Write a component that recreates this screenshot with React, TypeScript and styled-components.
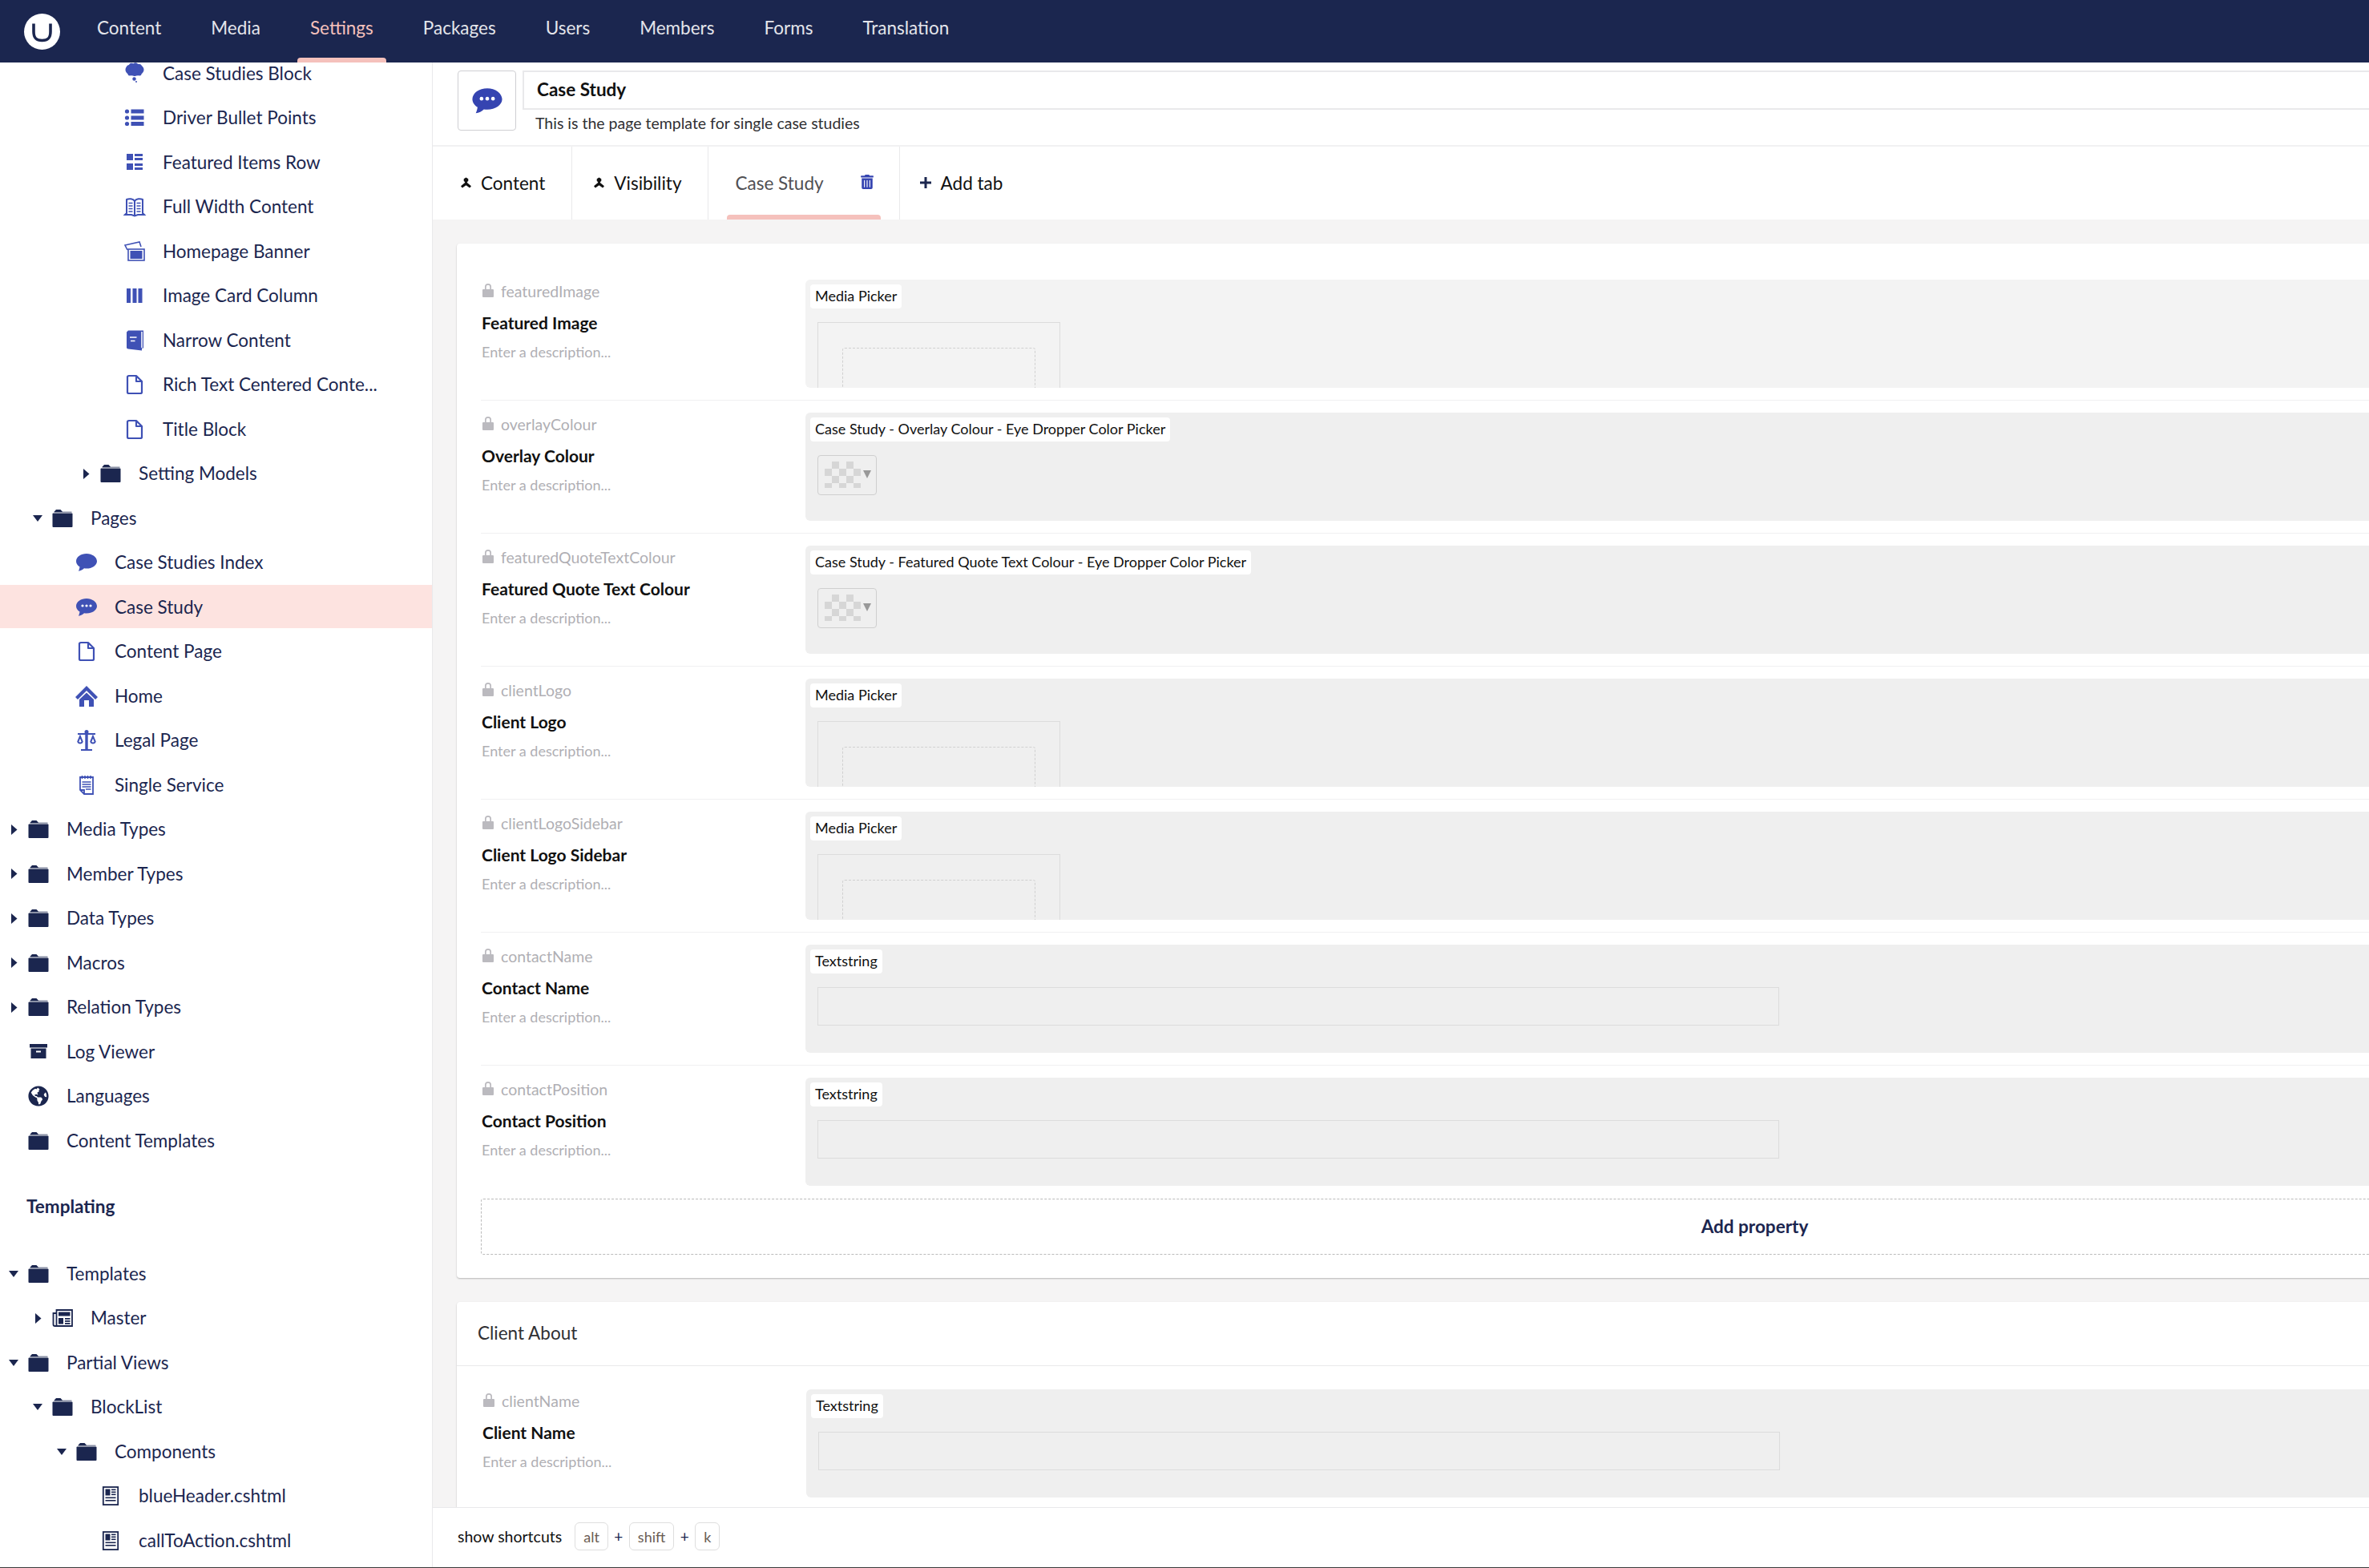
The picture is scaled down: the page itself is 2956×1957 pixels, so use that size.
import * as React from 'react';
import styled, { createGlobalStyle } from 'styled-components';
import { FaGlobeAmericas, FaTrashAlt } from 'react-icons/fa';

const GlobalStyle = createGlobalStyle`
  html, body {
    margin: 0;
    padding: 0;
    background: #fff;
  }
  * {
    box-sizing: border-box;
  }
  body {
    font-family: Lato, "Noto Sans", sans-serif;
    color: #1b264f;
    overflow: hidden;
  }
`;

const Page = styled.div`
  height: 1957px;
  display: flex;
  flex-direction: column;
  overflow: hidden;
  border-bottom: 1px solid #3a3a3a;
`;

const TopBar = styled.header`
  height: 78px;
  flex: none;
  display: flex;
  align-items: center;
  padding-left: 30px;
  background: #1b264f;
`;
const Logo = styled.svg`
  width: 45px;
  height: 45px;
  flex: none;
  margin-right: 15px;
`;
const Nav = styled.nav`
  display: flex;
  height: 100%;
`;
const NavItem = styled.a<{ $active?: boolean }>`
  position: relative;
  display: flex;
  align-items: center;
  height: 100%;
  padding: 0 31px 10px;
  font-size: 22.5px;
  color: ${(p) => (p.$active ? '#f5c1bc' : '#e4e5eb')};
  &::after {
    content: '';
    display: ${(p) => (p.$active ? 'block' : 'none')};
    position: absolute;
    left: 15px;
    right: 15px;
    bottom: 0;
    height: 6px;
    border-radius: 4px 4px 0 0;
    background: #f5c1bc;
  }
`;

const Body = styled.div`
  flex: 1;
  min-height: 0;
  display: flex;
`;

const Sidebar = styled.aside`
  width: 540px;
  flex: none;
  overflow: hidden;
  background: #fff;
  border-right: 1px solid #e9e9eb;
`;
const TreeList = styled.div`
  margin-top: -14px;
`;
const TreeRow = styled.div<{ $level: number; $active?: boolean }>`
  height: ${(p) => (p.$active ? '54px' : '55.5px')};
  margin-bottom: ${(p) => (p.$active ? '1.5px' : '0')};
  display: flex;
  align-items: center;
  padding-top: ${(p) => (p.$active ? '1px' : '0')};
  padding-left: ${(p) => 8 + p.$level * 30}px;
  font-size: 22.5px;
  line-height: 27px;
  color: #1b264f;
  white-space: nowrap;
  background: ${(p) => (p.$active ? '#fde3e0' : 'transparent')};
`;
const RowLabel = styled.span`
  margin-top: -1px;
`;
const CaretSlot = styled.span`
  width: 18px;
  height: 14px;
  flex: none;
  display: flex;
  align-items: center;
  justify-content: center;
  margin-right: 8px;
`;
const IconSlot = styled.span<{ $tone: string }>`
  width: 28px;
  height: 28px;
  flex: none;
  display: flex;
  align-items: center;
  justify-content: center;
  margin-right: 21px;
  color: ${(p) => p.$tone};
  svg {
    display: block;
    overflow: visible;
  }
`;
const SectionTitle = styled.div`
  height: 110.5px;
  display: flex;
  align-items: center;
  padding: 0 0 3px 33px;
  font-size: 22.5px;
  font-weight: 700;
  color: #1b264f;
`;

const Main = styled.main`
  flex: 1;
  min-width: 0;
  display: flex;
  flex-direction: column;
  overflow: hidden;
  background: #fff;
`;
const EditorHead = styled.div`
  height: 105px;
  flex: none;
  display: flex;
  align-items: flex-start;
  padding: 10px 0 0 31px;
  border-bottom: 2px solid #f1f1f2;
`;
const IconBox = styled.div`
  width: 73px;
  height: 75px;
  flex: none;
  display: flex;
  align-items: center;
  justify-content: center;
  margin-right: 8px;
  color: #3544b1;
  border: 1px solid #cfcfd3;
  border-radius: 4px;
`;
const HeadFields = styled.div`
  flex: 1;
  min-width: 0;
`;
const NameField = styled.div`
  height: 49px;
  display: flex;
  align-items: center;
  padding: 0 0 2px 16px;
  font-size: 22.5px;
  font-weight: 700;
  color: #111;
  border-top: 2px solid #e9e9eb;
  border-left: 2px solid #e9e9eb;
  border-bottom: 2px solid #e9e9eb;
`;
const DescField = styled.div`
  padding: 5px 0 0 16px;
  font-size: 19.5px;
  line-height: 24px;
  color: #303033;
`;

const Tabs = styled.div`
  height: 91px;
  flex: none;
  display: flex;
  padding-left: 8px;
`;
const Tab = styled.div<{ $active?: boolean; $last?: boolean }>`
  position: relative;
  display: flex;
  align-items: center;
  padding: ${(p) => (p.$active ? '0 31px 1px 33px' : p.$last ? '0 0 1px 25px' : '0 33px 1px 27px')};
  font-size: 22.5px;
  color: ${(p) => (p.$active ? '#515054' : '#111')};
  border-right: ${(p) => (p.$last ? 'none' : '1px solid #e9e9eb')};
  &::after {
    content: '';
    display: ${(p) => (p.$active ? 'block' : 'none')};
    position: absolute;
    left: 23px;
    right: 23px;
    bottom: 0;
    height: 6px;
    border-radius: 4px 4px 0 0;
    background: #f5c1bc;
  }
`;
const TabGlyph = styled.svg`
  width: 13px;
  height: 14px;
  flex: none;
  margin-right: 12px;
  color: #111;
`;
const TrashButton = styled.span`
  display: flex;
  margin: -3px 0 0 45px;
  color: #3544b1;
`;
const PlusGlyph = styled.svg`
  width: 14px;
  height: 14px;
  flex: none;
  margin-right: 12px;
  color: #1b264f;
`;

const Scroller = styled.div`
  flex: 1;
  min-height: 0;
  overflow: hidden;
  padding: 30px 0 0 30px;
  background: #f5f4f4;
`;
const Card = styled.section`
  width: 3239px;
  padding: 0 30px;
  background: #fff;
  border-radius: 4px;
  box-shadow: 0 1px 2px rgba(0, 0, 0, 0.25);
`;
const GroupCard = styled(Card)`
  margin-top: 30px;
  padding-left: 0;
`;
const GroupTitle = styled.div`
  height: 80px;
  display: flex;
  align-items: center;
  padding: 0 0 2px 26px;
  font-size: 22.5px;
  color: #303033;
  border-bottom: 1px solid #e9e9eb;
`;
const PropertyList = styled.div<{ $top: number; $inset: number }>`
  padding: ${(p) => p.$top}px 0 0 ${(p) => p.$inset}px;
`;
const PropertyRow = styled.div<{ $plain?: boolean }>`
  display: grid;
  grid-template-columns: 405px 1fr;
  padding: 15px 0;
  border-bottom: 1px solid ${(p) => (p.$plain ? 'transparent' : '#f0f0f1')};
`;
const PropertyInfo = styled.div`
  padding: 2px 0 0 1px;
`;
const AliasLine = styled.div`
  display: flex;
  align-items: center;
  gap: 9px;
  height: 24px;
  font-size: 19.5px;
  color: #b0afb4;
`;
const LockGlyph = styled.svg`
  width: 14px;
  height: 18px;
  flex: none;
  margin: -3px 0 0 1px;
  color: #bbbabf;
`;
const PropertyName = styled.div`
  margin-top: 14px;
  height: 28px;
  line-height: 28px;
  font-size: 21px;
  font-weight: 700;
  color: #111;
`;
const PropertyDesc = styled.div`
  margin-top: 10px;
  height: 24px;
  line-height: 24px;
  font-size: 18px;
  color: #b0afb4;
`;
const EditorPanel = styled.div<{ $light?: boolean }>`
  height: 135px;
  padding: 6px 0 0 6px;
  overflow: hidden;
  background: ${(p) => (p.$light ? '#f3f3f3' : '#efefef')};
  border-radius: 6px 0 0 6px;
`;
const EditorChip = styled.span`
  display: inline-block;
  height: 30px;
  line-height: 29px;
  padding: 0 6px;
  font-size: 18px;
  color: #111;
  background: #fff;
  border-radius: 4px;
`;
const EditorSlot = styled.div`
  margin: 17px 0 0 9px;
`;
const MediaBox = styled.div`
  width: 303px;
  height: 120px;
  padding: 31px 0 0 30px;
  border: 1px solid #dcdcdc;
`;
const MediaDrop = styled.div`
  width: 241px;
  height: 100px;
  border: 1px dashed #d0d0d0;
  border-radius: 3px;
`;
const SwatchButton = styled.div`
  width: 74px;
  height: 50px;
  display: flex;
  align-items: flex-start;
  padding: 7px 0 0 8px;
  border: 1px solid #cfcfcf;
  border-radius: 4px;
`;
const Checker = styled.div`
  width: 45px;
  height: 33px;
  background: repeating-conic-gradient(#d6d6d6 0% 25%, transparent 0% 50%) 0 0 / 18px 18px;
`;
const SwatchArrow = styled.span`
  width: 0;
  height: 0;
  margin: 11px 0 0 3px;
  border-left: 5.5px solid transparent;
  border-right: 5.5px solid transparent;
  border-top: 10px solid #999;
`;
const TextInput = styled.div`
  width: 1200px;
  height: 48px;
  border: 1px solid #dcdcdc;
`;
const AddProperty = styled.div`
  height: 70px;
  padding-bottom: 2px;
  display: flex;
  align-items: center;
  justify-content: center;
  font-size: 22.5px;
  font-weight: 700;
  color: #1b264f;
  border: 1px dashed #bbb;
  border-radius: 3px;
`;
const CardFoot = styled.div`
  height: 29px;
`;

const Footer = styled.footer`
  height: 75px;
  flex: none;
  display: flex;
  align-items: center;
  padding: 0 0 3px 31px;
  font-size: 19.5px;
  color: #111;
  background: #fff;
  border-top: 1px solid #e9e9eb;
`;
const ShortcutLabel = styled.span`
  margin-right: 16px;
`;
const KeyCap = styled.span`
  height: 35px;
  display: flex;
  align-items: center;
  padding: 0 10px;
  font-size: 18px;
  color: #6b5d54;
  border: 1px solid #dedede;
  border-radius: 6px;
`;
const KeyPlus = styled.span`
  width: 26px;
  text-align: center;
  font-size: 19px;
  color: #1b264f;
`;

type IconName =
  | 'cloud' | 'list' | 'thumbs' | 'bookOpen' | 'photos' | 'columns' | 'book' | 'doc'
  | 'folder' | 'chat' | 'chatDots' | 'home' | 'legal' | 'notepad' | 'box' | 'globe'
  | 'news' | 'article';

function Glyph({ name, size = 28 }: { name: IconName; size?: number }) {
  if (name === 'globe') return <FaGlobeAmericas size={26} />;
  const parts: Record<string, React.ReactNode> = {
    cloud: (
      <g fill="currentColor">
        <ellipse cx="14" cy="9" rx="11.500" ry="7.800" />
        <circle cx="10" cy="3.500" r="2.800" />
        <circle cx="15" cy="3" r="2.800" />
        <circle cx="20" cy="4.500" r="2.500" />
        <circle cx="6.500" cy="6" r="2.500" />
        <circle cx="8" cy="14" r="2.500" />
        <circle cx="14" cy="15" r="2" />
        <circle cx="20" cy="14" r="2.500" />
        <circle cx="13.500" cy="20.500" r="2.200" />
        <circle cx="16" cy="24" r="1" />
      </g>
    ),
    list: (
      <g fill="currentColor">
        <circle cx="4.500" cy="6" r="2.600" />
        <circle cx="4.500" cy="14" r="2.600" />
        <circle cx="4.500" cy="21.500" r="2.600" />
        <rect x="9.500" y="3.500" width="16" height="5" />
        <rect x="9.500" y="11.500" width="16" height="5" />
        <rect x="9.500" y="19" width="16" height="5" />
      </g>
    ),
    thumbs: (
      <g fill="currentColor">
        <rect x="4" y="3" width="8" height="8" />
        <rect x="4" y="15" width="8" height="8" />
        <rect x="14" y="3" width="10" height="3" />
        <rect x="14" y="8" width="10" height="3" />
        <rect x="14" y="15" width="10" height="3" />
        <rect x="14" y="20" width="10" height="3" />
      </g>
    ),
    bookOpen: (
      <g fill="none" stroke="currentColor">
        <path strokeWidth="2" d="M14 7C12 4 7 3.500 4 5V22l-2 2h8l4 1.500 4-1.500h8l-2-2V5C21 3.500 16 4 14 7zM14 7v18" />
        <path strokeWidth="1.500" d="M6.500 9.500h5M6.500 13h5M6.500 16.500h5M6.500 20h5M16.500 9.500h5M16.500 13h5M16.500 16.500h5M16.500 20h5" />
      </g>
    ),
    photos: (
      <g>
        <path fill="none" stroke="currentColor" strokeWidth="1.600" d="M5 12 2 6 20 2l2 6" />
        <rect x="6" y="11" width="20" height="14" fill="#fff" stroke="currentColor" strokeWidth="1.600" />
        <rect x="8.500" y="13" width="15" height="10" fill="currentColor" />
      </g>
    ),
    columns: (
      <g fill="currentColor">
        <rect x="4" y="5" width="5" height="18" />
        <rect x="11.500" y="5" width="5" height="18" />
        <rect x="18.500" y="5" width="5" height="18" />
      </g>
    ),
    book: (
      <g>
        <path fill="currentColor" d="M4 3.500 6 1.500h19v22h-2v3L6 24.500c-1.200 0-2-.8-2-2z" />
        <path stroke="#fff" strokeWidth="1.500" d="M8 10h8.500M9 14.500h5.500M23 3v20" fill="none" />
      </g>
    ),
    doc: (
      <path fill="none" stroke="currentColor" strokeWidth="2.200" strokeLinejoin="round" d="M5 4.500C5 3.500 6 3 7 3h9l7 7v13.500c0 1-1 1.500-2 1.500H7c-1 0-2-.5-2-1.500zM16 3v7h7" />
    ),
    folder: (
      <g fill="currentColor">
        <path d="M3.500 5.800 6 3h5.500l2.500 2.800h11.500v.8H3.500z" />
        <rect x="1.500" y="7.400" width="25" height="17.600" rx="1" />
      </g>
    ),
    chat: (
      <path fill="currentColor" d="M14 3C7 3 1 7 1 12.500c0 3 2 5.600 4.500 7-.2 2-.8 3.600-1.500 5.200 2.700-.3 5.300-1.700 7-3.400 1 .2 2 .3 3 .3 7 0 13-4 13-9.100S21 3 14 3z" />
    ),
    chatDots: (
      <g>
        <path fill="currentColor" d="M14 3C7 3 1 7 1 12.500c0 3 2 5.600 4.500 7-.2 2-.8 3.600-1.500 5.200 2.700-.3 5.300-1.700 7-3.400 1 .2 2 .3 3 .3 7 0 13-4 13-9.100S21 3 14 3z" />
        <circle cx="9" cy="12" r="1.600" fill="#fff" />
        <circle cx="14" cy="12" r="1.600" fill="#fff" />
        <circle cx="19" cy="12" r="1.600" fill="#fff" />
      </g>
    ),
    home: (
      <g fill="currentColor">
        <path d="M14 1 28 15l-3 3L14 7 3 18l-3-3z" />
        <path d="M5 18 14 9.500 23 18v9h-6v-8h-6v8H5z" />
      </g>
    ),
    legal: (
      <g>
        <g fill="currentColor">
          <circle cx="14" cy="3.500" r="2.500" />
          <rect x="3" y="5" width="22" height="2" />
          <rect x="12.300" y="5" width="3.400" height="20" />
          <rect x="7" y="25" width="14" height="2" />
        </g>
        <path fill="none" stroke="currentColor" strokeWidth="2" d="M6 9 3.300 15.500a2.800 2.800 0 0 0 5.400 0zM22 9l-2.700 6.500a2.800 2.800 0 0 0 5.400 0z" />
      </g>
    ),
    notepad: (
      <g fill="none" stroke="currentColor">
        <path strokeWidth="1.800" d="M6 4h16v21H11l-5-5z" />
        <path strokeWidth="1.800" d="M6 20h5v5" />
        <path strokeWidth="1.500" d="M8.500 2v4M12 2v4M15.500 2v4M19 2v4" />
        <path strokeWidth="1.500" d="M8.500 10h11M8.500 13h11M8.500 16h11M13 19h6.500" />
      </g>
    ),
    box: (
      <g>
        <rect x="3" y="4" width="22" height="4.500" fill="currentColor" />
        <rect x="4.500" y="9.500" width="19" height="12.500" fill="currentColor" />
        <rect x="11" y="12.500" width="6" height="2" fill="#fff" />
      </g>
    ),
    news: (
      <g>
        <path fill="none" stroke="currentColor" strokeWidth="1.800" d="M6.500 4H26v20H6.500zM6.500 8H2.500v14c0 1 1 2 2 2h2" />
        <g fill="currentColor">
          <rect x="9" y="6.500" width="14.500" height="5" />
          <rect x="9" y="14" width="6" height="7.500" />
          <rect x="17" y="14" width="6.500" height="1.800" />
          <rect x="17" y="17" width="6.500" height="1.800" />
          <rect x="17" y="20" width="6.500" height="1.800" />
        </g>
      </g>
    ),
    article: (
      <g>
        <rect x="4.800" y="3" width="18.400" height="22" fill="none" stroke="currentColor" strokeWidth="1.800" />
        <g fill="currentColor">
          <rect x="7.500" y="5.500" width="6" height="8" />
          <rect x="15" y="5.500" width="5.500" height="1.600" />
          <rect x="15" y="8.500" width="5.500" height="1.600" />
          <rect x="15" y="11.500" width="5.500" height="1.600" />
          <rect x="7.500" y="15.500" width="13" height="1.600" />
          <rect x="7.500" y="19" width="13" height="1.600" />
        </g>
      </g>
    ),
  };
  return (
    <svg width={size} height={size} viewBox="0 0 28 28">
      {parts[name]}
    </svg>
  );
}

function Caret({ dir }: { dir: 'right' | 'down' }) {
  return dir === 'right' ? (
    <svg width="9" height="13" viewBox="0 0 9 13">
      <path d="M1 0 8.500 6.500 1 13z" fill="#1b264f" />
    </svg>
  ) : (
    <svg width="12" height="8" viewBox="0 0 12 8">
      <path d="M0 0h12L6 8z" fill="#1b264f" />
    </svg>
  );
}

type TreeItem = {
  label: string;
  level: number;
  icon: IconName;
  caret?: 'right' | 'down';
  active?: boolean;
  dark?: boolean;
};

const folder = (label: string, level: number, caret?: 'right' | 'down'): TreeItem => ({
  label,
  level,
  caret,
  icon: 'folder',
  dark: true,
});

const treeTop: TreeItem[] = [
  { label: 'Case Studies Block', level: 4, icon: 'cloud' },
  { label: 'Driver Bullet Points', level: 4, icon: 'list' },
  { label: 'Featured Items Row', level: 4, icon: 'thumbs' },
  { label: 'Full Width Content', level: 4, icon: 'bookOpen' },
  { label: 'Homepage Banner', level: 4, icon: 'photos' },
  { label: 'Image Card Column', level: 4, icon: 'columns' },
  { label: 'Narrow Content', level: 4, icon: 'book' },
  { label: 'Rich Text Centered Conte...', level: 4, icon: 'doc' },
  { label: 'Title Block', level: 4, icon: 'doc' },
  folder('Setting Models', 3, 'right'),
  folder('Pages', 1, 'down'),
  { label: 'Case Studies Index', level: 2, icon: 'chat' },
  { label: 'Case Study', level: 2, icon: 'chatDots', active: true },
  { label: 'Content Page', level: 2, icon: 'doc' },
  { label: 'Home', level: 2, icon: 'home' },
  { label: 'Legal Page', level: 2, icon: 'legal' },
  { label: 'Single Service', level: 2, icon: 'notepad' },
  folder('Media Types', 0, 'right'),
  folder('Member Types', 0, 'right'),
  folder('Data Types', 0, 'right'),
  folder('Macros', 0, 'right'),
  folder('Relation Types', 0, 'right'),
  { label: 'Log Viewer', level: 0, icon: 'box', dark: true },
  { label: 'Languages', level: 0, icon: 'globe', dark: true },
  folder('Content Templates', 0),
];

const treeBottom: TreeItem[] = [
  folder('Templates', 0, 'down'),
  { label: 'Master', level: 1, icon: 'news', caret: 'right', dark: true },
  folder('Partial Views', 0, 'down'),
  folder('BlockList', 1, 'down'),
  folder('Components', 2, 'down'),
  { label: 'blueHeader.cshtml', level: 3, icon: 'article', dark: true },
  { label: 'callToAction.cshtml', level: 3, icon: 'article', dark: true },
];

function TreeEntry({ item }: { item: TreeItem }) {
  return (
    <TreeRow $level={item.level} $active={item.active}>
      <CaretSlot>{item.caret && <Caret dir={item.caret} />}</CaretSlot>
      <IconSlot $tone={item.dark ? '#1b264f' : '#3f51b5'}>
        <Glyph name={item.icon} />
      </IconSlot>
      <RowLabel>{item.label}</RowLabel>
    </TreeRow>
  );
}

type Prop = {
  alias: string;
  name: string;
  chip: string;
  editor: 'media' | 'color' | 'text';
  light?: boolean;
};

const properties: Prop[] = [
  { alias: 'featuredImage', name: 'Featured Image', chip: 'Media Picker', editor: 'media', light: true },
  { alias: 'overlayColour', name: 'Overlay Colour', chip: 'Case Study - Overlay Colour - Eye Dropper Color Picker', editor: 'color' },
  { alias: 'featuredQuoteTextColour', name: 'Featured Quote Text Colour', chip: 'Case Study - Featured Quote Text Colour - Eye Dropper Color Picker', editor: 'color' },
  { alias: 'clientLogo', name: 'Client Logo', chip: 'Media Picker', editor: 'media' },
  { alias: 'clientLogoSidebar', name: 'Client Logo Sidebar', chip: 'Media Picker', editor: 'media' },
  { alias: 'contactName', name: 'Contact Name', chip: 'Textstring', editor: 'text' },
  { alias: 'contactPosition', name: 'Contact Position', chip: 'Textstring', editor: 'text' },
];

function Property({ prop, plain }: { prop: Prop; plain?: boolean }) {
  return (
    <PropertyRow $plain={plain}>
      <PropertyInfo>
        <AliasLine>
          <LockGlyph viewBox="0 0 14 18">
            <path
              fill="currentColor"
              d="M3 8V5a4 4 0 0 1 8 0v3h2a1 1 0 0 1 1 1v8a1 1 0 0 1-1 1H1a1 1 0 0 1-1-1V9a1 1 0 0 1 1-1zm1.700 0h4.600V5a2.300 2.300 0 0 0-4.600 0z"
            />
          </LockGlyph>
          {prop.alias}
        </AliasLine>
        <PropertyName>{prop.name}</PropertyName>
        <PropertyDesc>Enter a description...</PropertyDesc>
      </PropertyInfo>
      <EditorPanel $light={prop.light}>
        <EditorChip>{prop.chip}</EditorChip>
        <EditorSlot>
          {prop.editor === 'media' && (
            <MediaBox>
              <MediaDrop />
            </MediaBox>
          )}
          {prop.editor === 'color' && (
            <SwatchButton>
              <Checker />
              <SwatchArrow />
            </SwatchButton>
          )}
          {prop.editor === 'text' && <TextInput />}
        </EditorSlot>
      </EditorPanel>
    </PropertyRow>
  );
}

const TabIcon = () => (
  <TabGlyph viewBox="0 0 14 14">
    <path
      fill="currentColor"
      d="M7 0 10 1.800v3L8.500 6v1l5.500 4.500-2 2.500L7 10.500 2 14l-2-2.500L5.500 7V6L4 4.800v-3z"
    />
  </TabGlyph>
);

export default function App() {
  const navItems = ['Content', 'Media', 'Settings', 'Packages', 'Users', 'Members', 'Forms', 'Translation'];
  return (
    <Page>
      <GlobalStyle />
      <TopBar>
        <Logo viewBox="0 0 45 45">
          <circle cx="22.500" cy="22.500" r="22.500" fill="#fff" />
          <path
            d="M12 12.500v10c0 8 3 11 10.500 11s10.500-3 10.500-11v-10"
            fill="none"
            stroke="#1b264f"
            strokeWidth="3.600"
          />
        </Logo>
        <Nav>
          {navItems.map((n) => (
            <NavItem key={n} $active={n === 'Settings'}>
              {n}
            </NavItem>
          ))}
        </Nav>
      </TopBar>
      <Body>
        <Sidebar>
          <TreeList>
            {treeTop.map((t) => (
              <TreeEntry key={t.label} item={t} />
            ))}
            <SectionTitle>Templating</SectionTitle>
            {treeBottom.map((t) => (
              <TreeEntry key={t.label} item={t} />
            ))}
          </TreeList>
        </Sidebar>
        <Main>
          <EditorHead>
            <IconBox>
              <Glyph name="chatDots" size={40} />
            </IconBox>
            <HeadFields>
              <NameField>Case Study</NameField>
              <DescField>This is the page template for single case studies</DescField>
            </HeadFields>
          </EditorHead>
          <Tabs>
            <Tab>
              <TabIcon />
              Content
            </Tab>
            <Tab>
              <TabIcon />
              Visibility
            </Tab>
            <Tab $active>
              Case Study
              <TrashButton>
                <FaTrashAlt size={18} />
              </TrashButton>
            </Tab>
            <Tab $last>
              <PlusGlyph viewBox="0 0 14 14">
                <path d="M5.500 0h3v5.500H14v3H8.500V14h-3V8.500H0v-3h5.500z" fill="currentColor" />
              </PlusGlyph>
              Add tab
            </Tab>
          </Tabs>
          <Scroller>
            <Card>
              <PropertyList $top={30} $inset={0}>
                {properties.map((p, i) => (
                  <Property key={p.alias} prop={p} plain={i === properties.length - 1} />
                ))}
              </PropertyList>
              <AddProperty>Add property</AddProperty>
              <CardFoot />
            </Card>
            <GroupCard>
              <GroupTitle>Client About</GroupTitle>
              <PropertyList $top={14} $inset={31}>
                <Property prop={{ alias: 'clientName', name: 'Client Name', chip: 'Textstring', editor: 'text' }} />
              </PropertyList>
            </GroupCard>
          </Scroller>
          <Footer>
            <ShortcutLabel>show shortcuts</ShortcutLabel>
            <KeyCap>alt</KeyCap>
            <KeyPlus>+</KeyPlus>
            <KeyCap>shift</KeyCap>
            <KeyPlus>+</KeyPlus>
            <KeyCap>k</KeyCap>
          </Footer>
        </Main>
      </Body>
    </Page>
  );
}
